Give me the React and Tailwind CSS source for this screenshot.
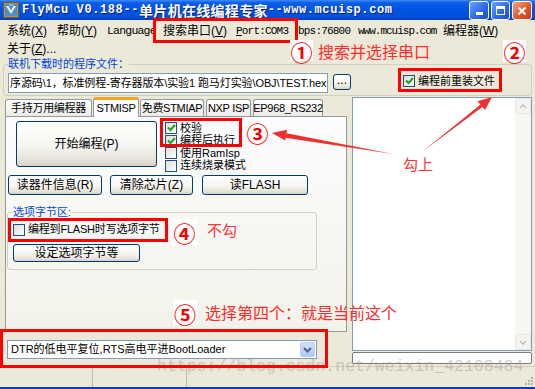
import React from "react";

function U({ children }) {
  return <span className="underline underline-offset-[1px]">{children}</span>;
}

function CheckMark() {
  return (
    <svg width="9" height="8" viewBox="0 0 9 8">
      <path d="M1 3.5 L3.5 6 L8 1" stroke="#21A121" strokeWidth="2" fill="none" />
    </svg>
  );
}

function Check({ checked }) {
  return (
    <span className="flex h-[12px] w-[12px] shrink-0 items-center justify-center border border-[#1C5180] bg-[linear-gradient(135deg,#DCDCD7,#FFFFFF)]">
      {checked ? <CheckMark /> : null}
    </span>
  );
}

function Btn({ className, children }) {
  return (
    <div
      className={
        "flex shrink-0 items-center justify-center whitespace-nowrap rounded-[3px] border border-[#003C74] bg-[linear-gradient(180deg,#FFFFFF_0%,#F5F5F1_55%,#E6E3D8_85%,#D6D0C5_100%)] text-[12px] leading-none text-black " +
        className
      }
    >
      {children}
    </div>
  );
}

function Tab({ className, children }) {
  return (
    <div
      className={
        "flex h-[17px] shrink-0 items-center justify-center whitespace-nowrap rounded-t-[3px] border border-b-0 border-[#919B9C] bg-[linear-gradient(180deg,#FFFFFF,#ECEBE6)] text-[11px] leading-none tracking-[-0.3px] " +
        className
      }
    >
      {children}
    </div>
  );
}

function Circ({ className, children }) {
  return (
    <div
      className={
        "absolute flex items-center justify-center bg-white font-['Noto_Sans_CJK_SC',sans-serif] text-[22px] font-bold leading-none text-[#F00000] " +
        className
      }
    >
      {children}
    </div>
  );
}

export default function App() {
  return (
    <div className="relative flex h-[389px] w-[535px] flex-col overflow-hidden border-b-[2px] border-[#0A3CC8] bg-[#ECE9D8] font-['Liberation_Sans','Noto_Sans_CJK_SC',sans-serif] text-[11px] text-black">
      {/* Title bar */}
      <div className="flex h-[20px] shrink-0 items-center bg-[linear-gradient(180deg,#3D8CF5_0%,#0B5DE6_14%,#0054E3_50%,#0050DA_85%,#0340B8_100%)]">
        <svg className="ml-[3px]" width="16" height="16" viewBox="0 0 16 16">
          <rect x="0.5" y="0.5" width="15" height="15" fill="#B58A4C" stroke="#7A5A2A" />
          <rect x="2" y="2" width="12" height="12" fill="#4E8FC8" />
          <path d="M3 4 L8 12 L13 4 L10.5 4 L8 8.5 L5.5 4 Z" fill="#E8F2FF" />
          <path d="M6 3 L10 3" stroke="#BFE0FF" strokeWidth="1" />
        </svg>
        <div className="ml-[3px] flex items-center whitespace-nowrap font-bold text-white [text-shadow:1px_1px_#0A1E6E]">
          <span className="font-['Liberation_Mono',monospace] text-[12px] tracking-[0.6px]">FlyMcu V0.188--</span>
          <span className="font-['Noto_Sans_CJK_SC',sans-serif] text-[14px] tracking-[0.3px]">单片机在线编程专家</span>
          <span className="font-['Liberation_Mono',monospace] text-[12px] tracking-[0.6px]">--www.mcuisp.com</span>
        </div>
        <div className="ml-auto flex gap-[2px] pr-[3px] pt-[1px]">
          <div className="flex h-[19px] w-[20px] items-end justify-center rounded-[3px] border border-white bg-[linear-gradient(135deg,#6CA2FF,#2F6CE8_55%,#1B4FC9)] pb-[4px]">
            <div className="h-[3px] w-[7px] bg-white" />
          </div>
          <div className="flex h-[19px] w-[19px] items-center justify-center rounded-[3px] border border-white bg-[linear-gradient(135deg,#6CA2FF,#2F6CE8_55%,#1B4FC9)]">
            <div className="h-[9px] w-[9px] border border-t-[3px] border-white" />
          </div>
          <div className="flex h-[19px] w-[20px] items-center justify-center rounded-[3px] border border-white bg-[linear-gradient(135deg,#F0A488,#E2582C_55%,#C23B12)]">
            <svg width="10" height="10" viewBox="0 0 10 10">
              <path d="M1.5 1.5 L8.5 8.5 M8.5 1.5 L1.5 8.5" stroke="white" strokeWidth="2" />
            </svg>
          </div>
        </div>
      </div>

      {/* Menu */}
      <div className="flex h-[22px] shrink-0 items-center whitespace-nowrap pl-[7px] text-[12px] leading-none">
        <span className="w-[50px]">系统(<U>X</U>)</span>
        <span className="w-[50px]">帮助(<U>Y</U>)</span>
        <span className="w-[56px] font-['Liberation_Mono',monospace] text-[11.5px] tracking-[-0.8px]">Language</span>
        <span className="w-[73px]">搜索串口(<U>V</U>)</span>
        <span className="w-[62px] font-['Liberation_Mono',monospace] text-[11px] tracking-[-0.8px]">
          <U>P</U>ort:COM3
        </span>
        <span className="w-[60px] font-['Liberation_Mono',monospace] text-[11px] tracking-[-0.8px]">bps:76800</span>
        <span className="w-[85px] font-['Liberation_Mono',monospace] text-[11px] tracking-[-1px]">www.mcuisp.com</span>
        <span>编程器(<U>W</U>)</span>
      </div>
      <div className="flex h-[14px] shrink-0 items-center pl-[7px] text-[12px] leading-none">
        关于(<U>Z</U>)...
      </div>

      {/* File group */}
      <fieldset className="mx-[3px] mt-[1px] shrink-0 rounded-[3px] border border-[#D0D0BF] px-[4px] pb-[2px]">
        <legend className="leading-[14px] text-[#0046D5]">联机下载时的程序文件：</legend>
        <div className="flex items-start">
          <div className="mt-[2px] h-[20px] w-[320px] shrink-0 overflow-hidden whitespace-nowrap border border-[#7F9DB9] bg-white pl-[1px] leading-[18px] tracking-[-0.1px]">
            序源码\1，标准例程-寄存器版本\实验1 跑马灯实验\OBJ\TEST.hex
          </div>
          <Btn className="ml-[5px] mt-[3px] h-[16px] w-[18px] items-end pb-[3px]">...</Btn>
          <div className="ml-[52px] mt-[4px] flex items-center gap-[3px] whitespace-nowrap leading-none">
            <Check checked />
            编程前重装文件
          </div>
        </div>
      </fieldset>

      {/* Main area */}
      <div className="flex h-[270px] shrink-0">
        {/* Left */}
        <div className="flex w-[351px] shrink-0 flex-col">
          <div className="mt-[1px] flex h-[19px] items-end pl-[5px]">
            <Tab className="w-[87px]">手持万用编程器</Tab>
            <div className="relative z-10 -mb-px ml-[1px] flex h-[20px] w-[46px] items-center justify-center whitespace-nowrap rounded-t-[3px] border border-b-0 border-[#919B9C] border-t-[3px] border-t-[#F5A623] bg-[#FCFCFE] leading-none tracking-[-0.3px]">
              STMISP
            </div>
            <Tab className="ml-[1px] w-[64px]">免费STMIAP</Tab>
            <Tab className="ml-[2px] w-[45px]">NXP ISP</Tab>
            <Tab className="ml-[2px] w-[70px]">EP968_RS232</Tab>
          </div>
          <div className="ml-[5px] h-[216px] w-[342px] border border-[#919B9C] bg-[linear-gradient(180deg,#FCFCFE,#F3F2EA)]">
            <div className="flex pl-[10px] pt-[4px]">
              <Btn className="h-[46px] w-[141px]">开始编程(P)</Btn>
              <div className="ml-[8px] flex flex-col whitespace-nowrap pt-[1px] leading-none">
                <div className="flex h-[12.5px] items-center gap-[3px]">
                  <Check checked />
                  校验
                </div>
                <div className="flex h-[12.5px] items-center gap-[3px]">
                  <Check checked />
                  编程后执行
                </div>
                <div className="flex h-[12.5px] items-center gap-[3px]">
                  <Check />
                  使用RamIsp
                </div>
                <div className="flex h-[12.5px] items-center gap-[3px]">
                  <Check />
                  连续烧录模式
                </div>
              </div>
            </div>
            <div className="mt-[3px] flex pl-[2px]">
              <Btn className="h-[20px] w-[94px]">读器件信息(R)</Btn>
              <Btn className="ml-[8px] h-[20px] w-[83px]">清除芯片(Z)</Btn>
              <Btn className="ml-[9px] h-[20px] w-[106px]">读FLASH</Btn>
            </div>
            <fieldset className="ml-[1px] mt-[11px] w-[310px] rounded-[3px] border border-[#D0D0BF] px-[5px] pb-[7px]">
              <legend className="leading-[12px] text-[#0046D5]">选项字节区:</legend>
              <div className="mt-[4px] flex h-[15px] items-center gap-[3px] whitespace-nowrap leading-none">
                <Check />
                <span className="tracking-[-0.2px]">编程到FLASH时写选项字节</span>
              </div>
              <Btn className="mt-[7px] h-[18px] w-[127px]">设定选项字节等</Btn>
            </fieldset>
          </div>
          <div className="ml-[7px] mt-[8px] flex h-[19px] w-[310px] items-center border border-[#7F9DB9] bg-white pl-[3px]">
            <span className="flex-1 whitespace-nowrap leading-none">DTR的低电平复位,RTS高电平进BootLoader</span>
            <div className="mr-[1px] flex h-[15px] w-[15px] items-center justify-center rounded-[2px] border border-[#B9CDF5] bg-[linear-gradient(180deg,#D2E0FD,#B2C9F7)]">
              <svg width="9" height="6" viewBox="0 0 9 6">
                <path d="M1 1 L4.5 4.5 L8 1" stroke="#4D6185" strokeWidth="2" fill="none" />
              </svg>
            </div>
          </div>
        </div>

        {/* Right */}
        <div className="ml-[1px] mt-[1px] flex w-[180px] shrink-0 flex-col">
          <div className="flex h-[254px] border border-[#7F9DB9] bg-white">
            <div className="flex-1" />
            <div className="flex w-[16px] flex-col justify-between bg-[#F7F6F1]">
              <div className="flex h-[16px] items-center justify-center rounded-[2px] border border-[#E8E8E1] bg-[#F4F4F0]">
                <svg width="8" height="5" viewBox="0 0 8 5">
                  <path d="M1 4 L4 1 L7 4" stroke="#C2C2BE" strokeWidth="1.6" fill="none" />
                </svg>
              </div>
              <div className="flex h-[16px] items-center justify-center rounded-[2px] border border-[#E8E8E1] bg-[#F4F4F0]">
                <svg width="8" height="5" viewBox="0 0 8 5">
                  <path d="M1 1 L4 4 L7 1" stroke="#C2C2BE" strokeWidth="1.6" fill="none" />
                </svg>
              </div>
            </div>
          </div>
          <div className="mt-[1px] h-[12px] rounded-[2px] border border-[#7A7A7A] bg-white" />
        </div>
      </div>

      {/* Status bar */}
      <div className="flex h-[21px] shrink-0 border-t border-[#D5D0BC]">
        <div className="w-[93px] border-r border-[#C0BBA8]" />
        <div className="w-[94px] border-r border-[#C0BBA8]" />
        <div className="relative flex-1">
          <svg className="absolute bottom-[1px] right-[1px]" width="11" height="11" viewBox="0 0 11 11">
            <g fill="#B8B4A2">
              <rect x="8" y="2" width="2" height="2" />
              <rect x="5" y="5" width="2" height="2" />
              <rect x="8" y="5" width="2" height="2" />
              <rect x="2" y="8" width="2" height="2" />
              <rect x="5" y="8" width="2" height="2" />
              <rect x="8" y="8" width="2" height="2" />
            </g>
          </svg>
        </div>
      </div>

      {/* Watermark */}
      <div className="pointer-events-none absolute left-[157px] top-[357px] whitespace-nowrap font-['Liberation_Mono',monospace] text-[16.5px] leading-[20px] text-[#A0A0A0]/50">
        https://blog.csdn.net/weixin_42108484
      </div>

      {/* Annotations */}
      <div className="absolute left-[153px] top-[18px] h-[25px] w-[145px] border-[3px] border-[#FF0000]" />
      <Circ className="left-[290px] top-[40px] h-[21px] w-[23px]">①</Circ>
      <div className="absolute left-[318px] top-[42px] whitespace-nowrap font-['Noto_Sans_CJK_SC',sans-serif] text-[16px] leading-[18px] text-[#FF2A2A]">
        搜索并选择串口
      </div>
      <Circ className="left-[503px] top-[40px] h-[22px] w-[23px]">②</Circ>
      <div className="absolute left-[398px] top-[68px] h-[24px] w-[104px] border-[3px] border-[#FF0000]" />

      <div className="absolute left-[160px] top-[118px] h-[29px] w-[82px] border-[3px] border-[#FF0000]" />
      <Circ className="left-[245px] top-[120px] h-[23px] w-[25px]">③</Circ>

      <div className="absolute left-[8px] top-[218px] h-[24px] w-[160px] border-[3px] border-[#FF0000]" />
      <Circ className="left-[172px] top-[219px] h-[26px] w-[25px]">④</Circ>
      <div className="absolute left-[207px] top-[221px] font-['Noto_Sans_CJK_SC',sans-serif] text-[15px] leading-[17px] text-[#FF3333]">
        不勾
      </div>

      <Circ className="left-[173px] top-[300px] h-[25px] w-[24px]">⑤</Circ>
      <div className="absolute left-[205px] top-[303px] whitespace-nowrap font-['Noto_Sans_CJK_SC',sans-serif] text-[16px] leading-[18px] text-[#FF2A2A]">
        选择第四个：就是当前这个
      </div>
      <div className="absolute left-[0px] top-[329px] h-[39px] w-[328px] border-[3px] border-[#FF0000]" />

      <div className="absolute left-[403px] top-[155px] font-['Noto_Sans_CJK_SC',sans-serif] text-[15px] leading-[17px] text-[#FF3333]">
        勾上
      </div>

      <svg className="pointer-events-none absolute left-0 top-0" width="535" height="389" viewBox="0 0 535 389">
        <polygon points="393,154 286.5,133.2 285.2,137.8" fill="#F03030" />
        <polygon points="272,133 287.2,129.8 285.2,140.6" fill="#F03030" />
        <polygon points="422,152 481.8,103.4 483.6,106.0" fill="#F03030" />
        <polygon points="492,97 477.5,101.2 485.0,110.0" fill="#F03030" />
      </svg>
    </div>
  );
}
